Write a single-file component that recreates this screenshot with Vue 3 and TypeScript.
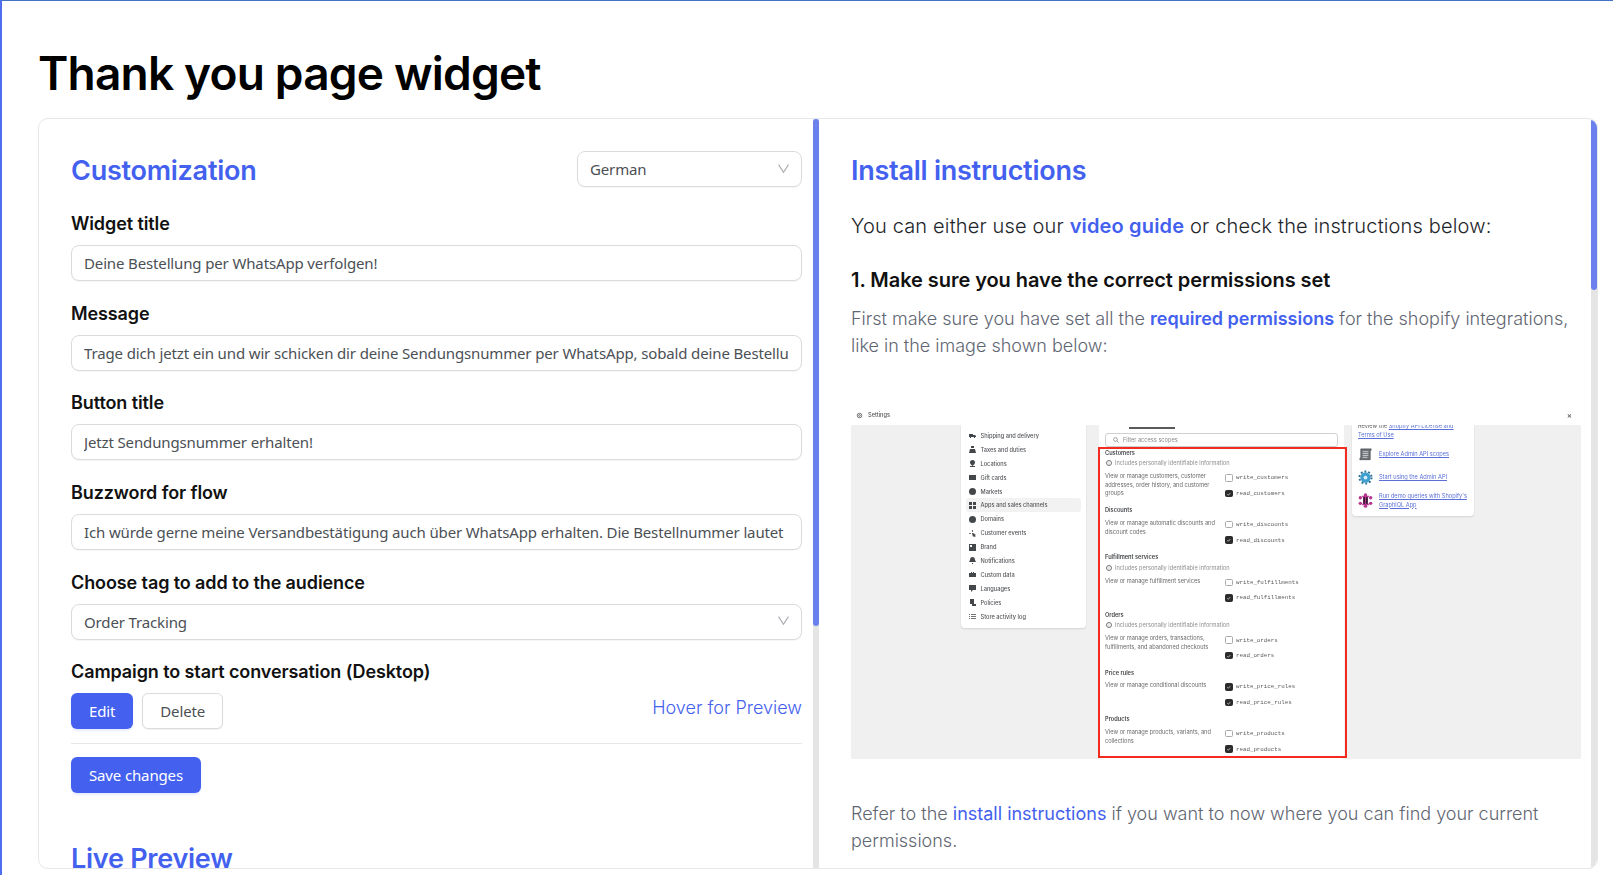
<script setup lang="ts">
const fields = [
  { label: 'Widget title', value: 'Deine Bestellung per WhatsApp verfolgen!' },
  { label: 'Message', value: 'Trage dich jetzt ein und wir schicken dir deine Sendungsnummer per WhatsApp, sobald deine Bestellung versandt wurde.' },
  { label: 'Button title', value: 'Jetzt Sendungsnummer erhalten!' },
  { label: 'Buzzword for flow', value: 'Ich würde gerne meine Versandbestätigung auch über WhatsApp erhalten. Die Bestellnummer lautet' },
]

// small dark glyphs for the settings sidebar in the screenshot
const navItems = [
  { label: 'Shipping and delivery', d: 'M0 2h4v3H0zM4 3h2l1 1v1H4zM1 5h1v1H1zM5 5h1v1H5z' },
  { label: 'Taxes and duties', d: 'M2 0h3v2H2zM1 3h5l1 4H0z' },
  { label: 'Locations', d: 'M3.5 0a2.5 2.5 0 0 1 2.5 2.5C6 4 4.500 5 3.500 6 2.500 5 1 4 1 2.500A2.500 2.500 0 0 1 3.500 0zM1 6h5v1H1z' },
  { label: 'Gift cards', d: 'M0 1h7v5H0zM1 3h5v1H1z' },
  { label: 'Markets', d: 'M3.500 0a3.500 3.500 0 1 1 0 7 3.500 3.500 0 0 1 0-7z' },
  { label: 'Apps and sales channels', d: 'M0 0h3v3H0zM4 0h3v3H4zM0 4h3v3H0zM4 4h3v3H4z', active: true },
  { label: 'Domains', d: 'M3.500 0a3.500 3.500 0 1 1 0 7 3.500 3.500 0 0 1 0-7z' },
  { label: 'Customer events', d: 'M3 3h1l3 2-1 .5L6.500 7h-1L5 6 4 7zM0 3h2v.8H0zM3 0h.8v2H3z' },
  { label: 'Brand', d: 'M0 0h7v7H0zM1 1v2h2V1z' },
  { label: 'Notifications', d: 'M3.500 0C5 0 6 1 6 3l1 2H0l1-2c0-2 1-3 2.500-3zM3 6h1v1H3z' },
  { label: 'Custom data', d: 'M0 2h2V1h1v1h1V1h1v1h2v4H0z' },
  { label: 'Languages', d: 'M0 0h7v5H4L2 7V5H0z' },
  { label: 'Policies', d: 'M1 0h4v5h2v2H3V5H1z' },
  { label: 'Store activity log', d: 'M0 1h1v.7H0zM2 1h5v.7H2zM0 3h1v.7H0zM2 3h5v.7H2zM0 5h1v.7H0zM2 5h5v.7H2z' },
]

const scopeGroups = [
  {
    title: 'Customers',
    pii: true,
    desc: 'View or manage customers, customer addresses, order history, and customer groups',
    write: 'write_customers',
    read: 'read_customers',
    writeOn: false,
  },
  {
    title: 'Discounts',
    pii: false,
    desc: 'View or manage automatic discounts and discount codes',
    write: 'write_discounts',
    read: 'read_discounts',
    writeOn: false,
  },
  {
    title: 'Fulfillment services',
    pii: true,
    desc: 'View or manage fulfillment services',
    write: 'write_fulfillments',
    read: 'read_fulfillments',
    writeOn: false,
  },
  {
    title: 'Orders',
    pii: true,
    desc: 'View or manage orders, transactions, fulfillments, and abandoned checkouts',
    write: 'write_orders',
    read: 'read_orders',
    writeOn: false,
  },
  {
    title: 'Price rules',
    pii: false,
    desc: 'View or manage conditional discounts',
    write: 'write_price_rules',
    read: 'read_price_rules',
    writeOn: true,
  },
  {
    title: 'Products',
    pii: false,
    desc: 'View or manage products, variants, and collections',
    write: 'write_products',
    read: 'read_products',
    writeOn: false,
  },
]
</script>

<template>
  <div class="page">
    <h1 class="page-title">Thank you page widget</h1>

    <div class="card">
      <section class="panel left-panel">
        <div class="panel-inner">
          <div class="custom-head">
            <h2 class="section-title">Customization</h2>
            <div class="select lang-select">
              <span>German</span>
              <svg class="chevron" viewBox="0 0 10 8"><path d="M.5.500 5 7.500 9.500.500" /></svg>
            </div>
          </div>

          <div v-for="field in fields" :key="field.label" class="field">
            <label class="field-label">{{ field.label }}</label>
            <input class="text-input" type="text" :value="field.value" />
          </div>

          <div class="field">
            <label class="field-label">Choose tag to add to the audience</label>
            <div class="select">
              <span>Order Tracking</span>
              <svg class="chevron" viewBox="0 0 10 8"><path d="M.5.500 5 7.500 9.500.500" /></svg>
            </div>
          </div>

          <div class="field campaign">
            <label class="field-label">Campaign to start conversation (Desktop)</label>
            <div class="campaign-row">
              <button class="btn primary">Edit</button>
              <button class="btn outline">Delete</button>
              <a class="hover-link">Hover for Preview</a>
            </div>
          </div>

          <div class="actions">
            <button class="btn primary">Save changes</button>
          </div>

          <h2 class="section-title live-title">Live Preview</h2>
        </div>
      </section>
      <div class="scrollbar"><div class="thumb left-thumb"></div></div>

      <section class="panel right-panel">
        <div class="panel-inner">
          <h2 class="section-title">Install instructions</h2>
          <p class="lead">You can either use our <a class="strong-link">video guide</a> or check the instructions below:</p>
          <h3 class="step-title">1. Make sure you have the correct permissions set</h3>
          <p class="body-text">First make sure you have set all the <a class="strong-link">required permissions</a> for the shopify integrations, like in the image shown below:</p>

          <div class="shot">
            <div class="shot-bar">
              <svg class="shot-gear" viewBox="0 0 8 8"><circle cx="4" cy="4" r="2.600" /><circle cx="4" cy="4" r="1" /></svg>
              <span>Settings</span>
              <span class="shot-close">×</span>
            </div>
            <div class="shot-body">
              <div class="shot-nav">
                <div v-for="item in navItems" :key="item.label" :class="['nav-row', { active: item.active }]">
                  <svg class="nav-icon" viewBox="0 0 7 7"><path :d="item.d" /></svg>
                  <span>{{ item.label }}</span>
                </div>
              </div>

              <div class="shot-main">
                <div class="shot-tab"></div>
                <div class="shot-filter">
                  <svg class="filter-icon" viewBox="0 0 8 8"><circle cx="3.300" cy="3.300" r="2.500" /><path d="M5.200 5.200 7.500 7.500" /></svg>
                  <span>Filter access scopes</span>
                </div>
                <div v-for="group in scopeGroups" :key="group.title" class="scope-group">
                  <div class="scope-title">{{ group.title }}</div>
                  <div v-if="group.pii" class="scope-pii">
                    <span class="pii-dot">i</span>
                    Includes personally identifiable information
                  </div>
                  <div class="scope-body">
                    <div class="scope-desc">{{ group.desc }}</div>
                    <div class="scope-checks">
                      <div class="check-row">
                        <span :class="['check', { on: group.writeOn }]">{{ group.writeOn ? '✓' : '' }}</span>
                        <code>{{ group.write }}</code>
                      </div>
                      <div class="check-row">
                        <span class="check on">✓</span>
                        <code>{{ group.read }}</code>
                      </div>
                    </div>
                  </div>
                </div>
                <div class="red-box"></div>
              </div>

              <div class="shot-side">
                <div class="side-note">Review the <a>Shopify API License and Terms of Use</a></div>
                <div class="side-row">
                  <svg class="side-icon" viewBox="0 0 16 16">
                    <path d="M3 2h11v1.500l-1 .5v9.500H2V12l1-.5z" fill="#6f7478" stroke="#3c3f42" stroke-width=".7" />
                    <path d="M5 5h6M5 7h6M5 9h6M5 11h5" stroke="#e4e6e8" stroke-width=".8" />
                  </svg>
                  <a>Explore Admin API scopes</a>
                </div>
                <div class="side-row">
                  <svg class="side-icon" viewBox="0 0 16 16">
                    <circle cx="8" cy="8" r="5.500" fill="#3f9fd0" />
                    <circle cx="8" cy="8" r="6.500" fill="none" stroke="#2b6f96" stroke-width="2" stroke-dasharray="2 2.100" />
                    <circle cx="8" cy="8" r="2" fill="#d6eefa" />
                  </svg>
                  <a>Start using the Admin API</a>
                </div>
                <div class="side-row">
                  <svg class="side-icon" viewBox="0 0 16 16">
                    <path d="M4 3h8l-1.500 2.500v5L12 13H4l1.500-2.500v-5z" fill="#b5368f" />
                    <path d="M6.500 4.500v7M9.500 4.500v7" stroke="#1f1722" stroke-width="1.600" />
                    <circle cx="8" cy="2" r="1.800" fill="#b5368f" />
                    <circle cx="8" cy="14" r="1.800" fill="#b5368f" />
                    <circle cx="2.500" cy="5" r="1.800" fill="#b5368f" />
                    <circle cx="13.500" cy="5" r="1.800" fill="#b5368f" />
                    <circle cx="2.500" cy="11" r="1.800" fill="#b5368f" />
                    <circle cx="13.500" cy="11" r="1.800" fill="#b5368f" />
                  </svg>
                  <a>Run demo queries with Shopify's GraphiQL App</a>
                </div>
              </div>
            </div>
          </div>

          <p class="body-text refer">Refer to the <a class="plain-link">install instructions</a> if you want to now where you can find your current permissions.</p>
        </div>
      </section>
      <div class="scrollbar"><div class="thumb right-thumb"></div></div>
    </div>
  </div>
</template>

<style>
html,
body {
  margin: 0;
  background: #fff;
  overflow: hidden;
}
</style>

<style scoped>
.page {
  box-sizing: border-box;
  height: 875px;
  padding: 49px 15px 6px 36px;
  border-top: 1px solid #4472c4;
  border-left: 2px solid #4f6ef0;
  display: flex;
  flex-direction: column;
  font-family: Inter, "Noto Sans", sans-serif;
  color: #000;
}

.page-title {
  margin: 0 0 22px;
  font-size: 46px;
  line-height: 46px;
  font-weight: 600;
  letter-spacing: -0.8px;
}

.card {
  flex: 1;
  min-height: 0;
  display: flex;
  border: 1px solid #e5e7eb;
  border-radius: 10px;
  overflow: hidden;
}

.panel {
  height: 100%;
  overflow: hidden;
}

.left-panel {
  width: 774px;
  flex: none;
}

.right-panel {
  flex: 1;
  min-width: 0;
}

.scrollbar {
  flex: none;
  width: 6px;
  background: #e5e5e5;
}

.thumb {
  background: #6a80ec;
  border-radius: 3px;
}

.left-thumb {
  height: 507px;
}

.right-thumb {
  height: 171px;
}

.panel-inner {
  box-sizing: border-box;
  padding: 32px 11px 0 32px;
}

.section-title {
  margin: 0;
  font-size: 27px;
  line-height: 40px;
  font-weight: 600;
  letter-spacing: -0.25px;
  color: #4361ee;
}

.custom-head {
  display: flex;
  justify-content: space-between;
  align-items: center;
  height: 36px;
  margin-bottom: 23px;
}

.custom-head .section-title {
  padding-top: 4px;
}

.select,
.text-input {
  box-sizing: border-box;
  width: 100%;
  height: 36px;
  border: 1px solid #d9dbdf;
  border-radius: 8px;
  padding: 0 12px;
  background: #fff;
  color: #4b5055;
  font-family: "Noto Sans", sans-serif;
  font-size: 15px;
  letter-spacing: -0.14px;
  outline: none;
  box-shadow: 0 1px 1px rgba(0, 0, 0, 0.04);
}

.select {
  display: flex;
  align-items: center;
  justify-content: space-between;
}

.lang-select {
  width: 225px;
}

.chevron {
  width: 11px;
  height: 9px;
  margin-top: -2px;
  fill: none;
  stroke: #a8abb0;
  stroke-width: 1;
}

.field {
  margin-bottom: 18.700px;
}

.field-label {
  display: block;
  height: 27px;
  margin-bottom: 8px;
  font-size: 18px;
  line-height: 27px;
  font-weight: 600;
  letter-spacing: -0.1px;
  color: #111;
}

.campaign {
  margin-bottom: 0;
}

.campaign-row {
  display: flex;
  align-items: center;
  gap: 9px;
  padding-bottom: 14px;
  border-bottom: 1px solid #e5e7eb;
}

.btn {
  height: 36px;
  padding: 0 17px;
  border-radius: 6px;
  border: 1px solid transparent;
  font-family: "Noto Sans", sans-serif;
  font-size: 15px;
  letter-spacing: -0.14px;
  cursor: pointer;
}

.btn.primary {
  background: #4361ee;
  color: #fff;
  box-shadow: 0 2px 2px rgba(67, 97, 238, 0.12);
}

.btn.outline {
  background: #fff;
  border-color: #d9dbdf;
  color: #4b5055;
  box-shadow: 0 1px 1px rgba(0, 0, 0, 0.05);
}

.hover-link {
  margin-left: auto;
  margin-top: -7px;
  font-size: 18px;
  font-weight: 300;
  color: #4361ee;
}

.actions {
  margin-top: 13px;
}

.live-title {
  margin-top: 46px;
}

.lead {
  margin: 20px 0 0;
  font-size: 20px;
  line-height: 30px;
  font-weight: 300;
  letter-spacing: 0.16px;
  color: #22252a;
}

.step-title {
  margin: 24px 0 0;
  font-size: 20px;
  line-height: 30px;
  font-weight: 600;
  letter-spacing: -0.05px;
  color: #111;
}

.body-text {
  margin: 10px 0 0;
  max-width: 722px;
  font-size: 18px;
  line-height: 27px;
  font-weight: 300;
  color: #5f6672;
}

.strong-link {
  font-weight: 600;
  color: #4361ee;
}

.plain-link {
  font-weight: 400;
  color: #4361ee;
}

.refer {
  margin-top: 41px;
}

/* the permissions screenshot */
.shot {
  margin-top: 36px;
  width: 730px;
  font-family: Inter, "Noto Sans", sans-serif;
  font-size: 5.650px;
  color: #55585c;
  filter: blur(0.4px);
}

.shot-bar {
  height: 30px;
  display: flex;
  align-items: center;
  gap: 5px;
  padding-left: 5px;
  padding-top: 10px;
  box-sizing: border-box;
  font-weight: 500;
}

.shot-gear {
  width: 7px;
  height: 7px;
  fill: none;
  stroke: #55585c;
  stroke-width: 0.9;
}

.shot-close {
  margin-left: auto;
  margin-right: 9px;
  font-size: 8px;
}

.shot-body {
  height: 334px;
  overflow: hidden;
  background: #f0f0f0;
  display: flex;
  align-items: flex-start;
  padding-left: 110px;
}

.shot-nav {
  flex: none;
  box-sizing: border-box;
  width: 125px;
  height: 203px;
  padding: 4px 5px 0;
  background: #fff;
  border-radius: 0 0 4px 4px;
  box-shadow: 0 1px 2px rgba(0, 0, 0, 0.12);
}

.nav-row {
  height: 13.900px;
  display: flex;
  align-items: center;
  gap: 4.500px;
  padding-left: 3px;
  border-radius: 3px;
  font-weight: 500;
}

.nav-row.active {
  background: #f2f2f2;
}

.nav-icon {
  width: 7px;
  height: 7px;
  fill: #44474a;
}

.shot-main {
  position: relative;
  flex: none;
  box-sizing: border-box;
  width: 245px;
  height: 334px;
  margin-left: 13px;
  padding: 0 6px;
  background: #fff;
  border-radius: 0 0 4px 4px;
}

.shot-tab {
  width: 46px;
  height: 2px;
  margin: 2px 0 0 24px;
  background: #5a5a5a;
}

.shot-filter {
  box-sizing: border-box;
  height: 14px;
  margin: 4px 0 0;
  display: flex;
  align-items: center;
  gap: 4px;
  padding-left: 7px;
  border: 0.5px solid #d0d0d0;
  border-radius: 3px;
  color: #8a8a8a;
}

.filter-icon {
  width: 6px;
  height: 6px;
  fill: none;
  stroke: #666;
  stroke-width: 0.8;
}

.scope-group {
  padding-top: 1.500px;
  height: 46.800px;
  box-sizing: border-box;
}

.scope-group:has(.scope-pii) {
  height: 57.800px;
}

.scope-title {
  height: 9px;
  line-height: 9px;
  font-weight: 600;
  color: #44474a;
}

.scope-pii {
  height: 11px;
  display: flex;
  align-items: center;
  gap: 3px;
  padding-left: 1px;
  color: #8e8e8e;
}

.pii-dot {
  box-sizing: border-box;
  width: 6px;
  height: 6px;
  border: 0.5px solid #777;
  border-radius: 50%;
  font-size: 4px;
  line-height: 5px;
  text-align: center;
}

.scope-body {
  display: flex;
  padding-top: 3.500px;
}

.scope-desc {
  box-sizing: border-box;
  width: 120px;
  padding-right: 2px;
  line-height: 8.700px;
  color: #6a6a6a;
}

.scope-checks {
  flex: 1;
  margin-top: -2px;
}

.check-row {
  height: 15.500px;
  display: flex;
  align-items: center;
  gap: 3.500px;
}

.check-row code {
  font-family: "Liberation Mono", monospace;
  font-size: 5.800px;
  color: #5b5b5b;
}

.check {
  box-sizing: border-box;
  width: 7.500px;
  height: 7.500px;
  border: 0.5px solid #aaa;
  border-radius: 1.500px;
  background: #fff;
  font-size: 5px;
  line-height: 7px;
  text-align: center;
  color: #fff;
}

.check.on {
  border-color: #2c2c2c;
  background: #2c2c2c;
}

.red-box {
  position: absolute;
  left: -1px;
  top: 22px;
  width: 249px;
  height: 311px;
  box-sizing: border-box;
  border: 2px solid #f32a1e;
  pointer-events: none;
}

.shot-side {
  flex: none;
  box-sizing: border-box;
  width: 122px;
  height: 91px;
  margin-left: 8px;
  padding: 0 6px;
  background: #fff;
  border-radius: 0 0 4px 4px;
  box-shadow: 0 1px 2px rgba(0, 0, 0, 0.12);
  line-height: 8.500px;
}

.shot-side a {
  color: #5a70d8;
  text-decoration: underline;
}

.side-note {
  height: 17px;
  margin-top: -3px;
  margin-bottom: 4px;
}

.side-row {
  display: flex;
  align-items: center;
  gap: 6px;
  min-height: 23px;
}

.side-icon {
  flex: none;
  width: 15px;
  height: 15px;
}
</style>
